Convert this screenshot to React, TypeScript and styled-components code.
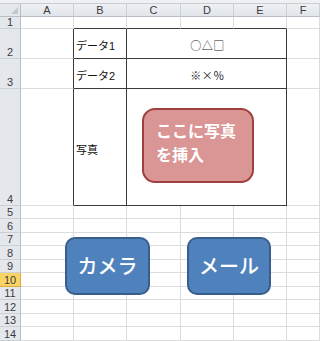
import React from 'react'
import styled, { createGlobalStyle } from 'styled-components'

const GlobalStyle = createGlobalStyle`
  html, body { margin: 0; padding: 0; background: #fff; }
  body { font-family: "Liberation Sans", "Noto Sans CJK JP", sans-serif; }
`

const COLS = ['A', 'B', 'C', 'D', 'E', 'F']
const ROWS = [12, 30, 30, 117, 13, 14, 13, 14, 13, 14, 13, 14, 13, 14, 12]
const GRID = '#dadcdd'
const INK = '#3a3a3a'

const Frame = styled.div`
  width: 320px;
  height: 341px;
  overflow: hidden;
  padding-top: 3px;
  box-sizing: border-box;
  background: #eef0f3;
`

const Sheet = styled.div`
  position: relative;
  display: grid;
  grid-template-columns: 21px 53px 53px 54px 53px 53px 33px;
  grid-template-rows: 13px ${ROWS.map(h => `${h}px`).join(' ')};
  background: #fff;
  border-top: 1px solid #c9ced6;
`

const Corner = styled.div`
  position: relative;
  background: #e4e7ec;
  border-right: 1px solid #b8bec6;
  border-bottom: 1px solid #b8bec6;
  &::after {
    content: '';
    position: absolute;
    right: 2px;
    bottom: 2px;
    border-left: 7px solid transparent;
    border-bottom: 7px solid #c3c8cf;
  }
`

const ColHeader = styled.div`
  display: flex;
  align-items: center;
  justify-content: center;
  background: linear-gradient(#eef0f3, #e1e5ea);
  border-right: 1px solid #cbd0d6;
  border-bottom: 1px solid #b8bec6;
  font-size: 11px;
  color: #3c3c3c;
`

const RowHeader = styled.div<{ $active?: boolean }>`
  display: flex;
  align-items: flex-end;
  justify-content: center;
  background: ${p => (p.$active ? '#f9d464' : '#e4e7ec')};
  border-right: 1px solid ${p => (p.$active ? '#e1a93a' : '#b8bec6')};
  border-bottom: 1px solid ${p => (p.$active ? '#e1a93a' : '#cbd0d6')};
  font-size: 11px;
  line-height: 12px;
  color: #3c3c3c;
  overflow: hidden;
`

const Cell = styled.div<{ $right?: boolean; $bottom?: boolean; $span?: number; $center?: boolean }>`
  display: flex;
  align-items: center;
  justify-content: ${p => (p.$center ? 'center' : 'flex-start')};
  grid-column: span ${p => p.$span ?? 1};
  padding: 3px 0 0 2px;
  box-sizing: border-box;
  border-right: 1px solid ${p => (p.$right ? INK : GRID)};
  border-bottom: 1px solid ${p => (p.$bottom ? INK : GRID)};
  font-size: 11px;
  color: #111;
  white-space: nowrap;
`

const Symbols = styled.span`
  font-family: "Noto Sans CJK JP", sans-serif;
  font-size: 11px;
  letter-spacing: 0.5px;
  color: #222;
`

const Shape = styled.div<{ $tone: 'red' | 'blue' }>`
  position: absolute;
  box-sizing: border-box;
  display: flex;
  color: #fff;
  font-family: "Noto Sans CJK JP", sans-serif;
  background: ${p => (p.$tone === 'red' ? '#d99694' : '#4f81bd')};
  border: 2px solid ${p => (p.$tone === 'red' ? '#a0403e' : '#395e8b')};
`

const PhotoBox = styled(Shape)`
  left: 142px;
  top: 104px;
  width: 112px;
  height: 75px;
  border-radius: 13px;
  flex-direction: column;
  padding: 8px 0 0 12px;
  font-size: 16px;
  font-weight: 700;
  line-height: 24px;
`

const Button = styled(Shape)<{ $left: number }>`
  left: ${p => p.$left}px;
  top: 233px;
  width: ${p => (p.$left < 100 ? 85 : 84)}px;
  height: 58px;
  border-radius: 10px;
  align-items: center;
  justify-content: center;
  font-size: 20px;
  font-weight: 500;
  padding-bottom: 2px;
`

const tableText: Record<number, [string, string]> = {
  2: ['データ1', '○△□'],
  3: ['データ2', '※×％'],
  4: ['写真', ''],
}

function Row({ n }: { n: number }) {
  const inTable = n >= 2 && n <= 4
  return (
    <>
      <RowHeader $active={n === 10}>{n <= 14 ? n : ''}</RowHeader>
      {inTable ? (
        <>
          <Cell $right />
          <Cell $right $bottom>{tableText[n][0]}</Cell>
          <Cell $right $bottom $span={3} $center>
            <Symbols>{tableText[n][1]}</Symbols>
          </Cell>
          <Cell />
        </>
      ) : (
        COLS.map(c => <Cell key={c} $bottom={n === 1 && c >= 'B' && c <= 'E'} />)
      )}
    </>
  )
}

export default function App() {
  return (
    <>
      <GlobalStyle />
      <Frame>
        <Sheet>
          <Corner />
          {COLS.map(c => <ColHeader key={c}>{c}</ColHeader>)}
          {ROWS.map((_, i) => <Row key={i} n={i + 1} />)}

          <PhotoBox $tone="red">
            <span>ここに写真</span>
            <span>を挿入</span>
          </PhotoBox>
          <Button $tone="blue" $left={65}>カメラ</Button>
          <Button $tone="blue" $left={187}>メール</Button>
        </Sheet>
      </Frame>
    </>
  )
}
